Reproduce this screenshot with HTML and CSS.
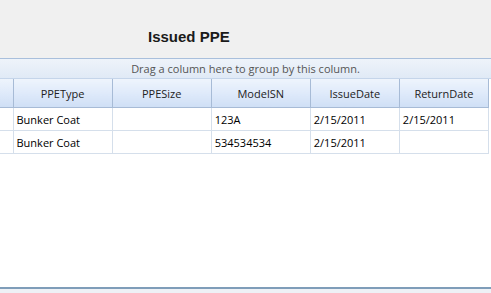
FILE: index.html
```html
<!DOCTYPE html>
<html>
<head>
  <title>Issued PPE</title>
  <link rel="stylesheet" href="styles.css">
</head>
<body>
  <div class="title-bar">
    <h1>Issued PPE</h1>
  </div>

  <div class="grid">
    <div class="group-panel">Drag a column here to group by this column.</div>
    <table class="grid-table">
      <colgroup>
        <col class="col-indicator">
        <col class="col-wide">
        <col class="col-wide">
        <col class="col-wide">
        <col class="col-narrow">
        <col class="col-narrow">
      </colgroup>
      <thead>
        <tr>
          <th></th>
          <th>PPEType</th>
          <th>PPESize</th>
          <th>ModelSN</th>
          <th>IssueDate</th>
          <th>ReturnDate</th>
        </tr>
      </thead>
      <tbody>
        <tr>
          <td class="indicator"></td>
          <td>Bunker Coat</td>
          <td></td>
          <td>123A</td>
          <td>2/15/2011</td>
          <td>2/15/2011</td>
        </tr>
        <tr>
          <td class="indicator"></td>
          <td>Bunker Coat</td>
          <td></td>
          <td>534534534</td>
          <td>2/15/2011</td>
          <td></td>
        </tr>
      </tbody>
    </table>
    <div class="grid-empty"></div>
  </div>
  <div class="footer"></div>
</body>
</html>
```

FILE: styles.css
```css
body {
  margin: 0;
  padding: 0;
  background-color: #f0f0f0;
  font-family: "Open Sans", Arial, sans-serif;
  font-size: 11px;
  color: #000;
  width: 491px;
  height: 293px;
  overflow: hidden;
}

.title-bar {
  height: 58px;
  background-color: #f0f0f0;
  display: flex;
  align-items: center;
  padding-left: 148px;
  box-sizing: border-box;
  padding-top: 14px;
}

.title-bar h1 {
  margin: 0;
  font-family: "Liberation Sans", Arial, sans-serif;
  font-size: 15px;
  font-weight: bold;
  color: #1a1a1a;
}

.grid {
  background-color: #fff;
  border-top: 1px solid #a9bfdc;
  border-bottom: 2px solid #7f9db9;
  height: 228px;
  display: flex;
  flex-direction: column;
}

.group-panel {
  height: 19px;
  line-height: 19px;
  text-align: center;
  color: #555;
  background: linear-gradient(#eef3fa, #e0eaf6);
  border-bottom: 1px solid #c5d5ea;
}

.grid-table {
  border-collapse: collapse;
  table-layout: fixed;
  width: 489px;
}

.col-indicator { width: 13px; }
.col-wide { width: 99px; }
.col-narrow { width: 89px; }

.grid-table th {
  height: 28px;
  padding: 0;
  font-weight: normal;
  color: #222;
  text-align: center;
  background: linear-gradient(#eef4fc, #dfeafa 50%, #cfdff5);
  border: 1px solid #a7bbd6;
  border-top: none;
}

.grid-table th:first-child {
  border-left: none;
}

.grid-table td {
  height: 22px;
  padding: 0 0 0 3px;
  white-space: nowrap;
  overflow: hidden;
  border: 1px solid #d5dfeb;
}

.grid-table td.indicator {
  border-left: none;
  padding: 0;
}

.grid-empty {
  flex: 1;
}

.footer {
  height: 4px;
  background-color: #eef1f6;
}
```
